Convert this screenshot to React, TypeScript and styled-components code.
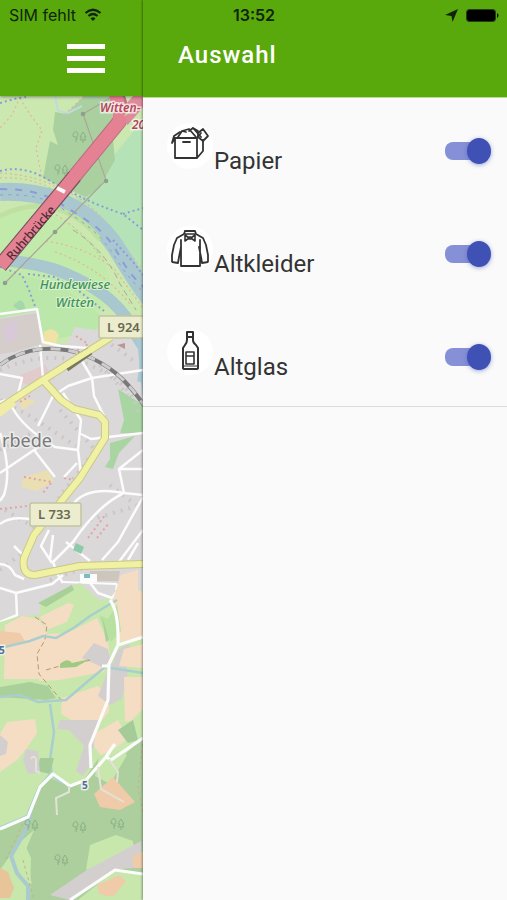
import React from 'react';
import styled, { createGlobalStyle } from 'styled-components';

const GlobalStyle = createGlobalStyle`
  *, *::before, *::after { box-sizing: border-box; }
  html, body { margin: 0; background: #fafafa; }
  body { font-family: Roboto, "Open Sans", sans-serif; color: #333; }
`;

const Screen = styled.div`
  position: relative;
  display: grid;
  grid-template-columns: 143px 1fr;
  min-height: 100vh;
`;

const StatusBar = styled.div`
  position: absolute;
  inset: 0 0 auto 0;
  z-index: 3;
  display: grid;
  grid-template-columns: 1fr auto 1fr;
  align-items: center;
  height: 30px;
  padding: 0 8px 0 9px;
  font-family: Inter, "Liberation Sans", sans-serif;
  font-size: 16px;
  color: #10240a;
`;

const StatusGroup = styled.div<{ $end?: boolean }>`
  display: flex;
  align-items: center;
  gap: 8px;
  justify-content: ${(p) => (p.$end ? 'flex-end' : 'flex-start')};
`;

const Clock = styled.time`
  font-weight: 600;
`;

const MapPane = styled.main`
  display: flex;
  flex-direction: column;
  min-width: 0;
  overflow: hidden;
`;

const MapHeader = styled.header`
  position: relative;
  z-index: 1;
  display: flex;
  justify-content: flex-end;
  height: 96px;
  padding: 40px 36px 0 0;
  background: #5aa90c;
  box-shadow: 0 1px 3px rgba(0, 0, 0, 0.4);
`;

const MenuButton = styled.button`
  width: 42px;
  height: 38px;
  padding: 0;
  border: 0;
  background: transparent;
  color: #fff;
  cursor: pointer;
`;

const MapArt = styled.svg`
  display: block;
  flex: 1;
  width: 100%;
  min-height: 804px;
`;

const Drawer = styled.aside`
  z-index: 2;
  display: flex;
  flex-direction: column;
  min-width: 0;
  background: #fafafa;
  box-shadow: -1px 0 2px rgba(0, 0, 0, 0.35);
`;

const DrawerHeader = styled.header`
  height: 98px;
  padding: 39px 35px 0;
  background: #5aa90c;
  border-bottom: 1px solid #b9dc98;
`;

const Title = styled.h1`
  margin: 0;
  font-size: 24px;
  line-height: 32px;
  font-weight: 500;
  letter-spacing: 1px;
  color: #fff;
`;

const OptionList = styled.ul`
  display: grid;
  grid-auto-rows: 103px;
  margin: -1px 0 0;
  padding: 0;
  list-style: none;
  border-bottom: 1px solid #dcdcdc;
`;

const Option = styled.li`
  display: flex;
  align-items: center;
  justify-content: space-between;
  padding: 0 16px 0 24px;
`;

const OptionLabel = styled.label`
  display: flex;
  align-items: baseline;
  gap: 1px;
  font-size: 24px;
  line-height: 28px;
`;

const OptionIcon = styled.svg`
  width: 46px;
  height: 46px;
  border-radius: 50%;
  background: #fff;
  fill: none;
  stroke: #333;
  stroke-width: 2;
  stroke-linejoin: round;
  stroke-linecap: round;
`;

const Switch = styled.input`
  appearance: none;
  display: flex;
  align-items: center;
  width: 46px;
  height: 26px;
  margin: 4px 0 0;
  cursor: pointer;

  &::before {
    content: '';
    width: 40px;
    height: 18px;
    border-radius: 8px;
    background: #bdbdbd;
  }

  &::after {
    content: '';
    width: 24px;
    height: 26px;
    margin-left: -40px;
    border-radius: 50%;
    background: #f5f5f5;
    box-shadow: 0 1px 4px rgba(63, 81, 181, 0.5);
  }

  &:checked::before { background: #8690d6; }
  &:checked::after { margin-left: -18px; background: #3f51b5; }
`;

const Tree = ({ x, y }: { x: number; y: number }) => (
  <g transform={`translate(${x} ${y})`} fill="none" stroke="#89b284" strokeWidth="1">
    <path d="M-3 5V0M-6-3q3-5 5 0q0 4-3 3q-3 0-2-3M-3 3l2-2" />
    <path d="M4 6V2M4-5L1 0h2L1 3h6L5 0h2z" />
  </g>
);

const StreetMap = () => (
  <MapArt viewBox="0 96 143 804" preserveAspectRatio="xMinYMin slice" role="img" aria-label="Karte">
    <rect y="96" width="143" height="804" fill="#cdebb0" />

    {/* meadows and woodland north of the river */}
    <path d="M143 120L100 172 75 200 112 232 143 290z" fill="#b6e5b8" />
    <path d="M55 112L66 114 84 96H118L117 120 113 140 115 160 99 188 86 197 62 187 43 178 50 141 58 145 53 130z" fill="#abd2a0" />
    <path d="M0 215C40 202 80 222 103 255L112 290 90 330 0 330z" fill="#c3edaa" />
    <path d="M0 270L60 285 110 322 92 332 50 340 0 318z" fill="#bcebaa" />
    <path d="M55 96l3 15 10 2 14-7" fill="none" stroke="#bfdce0" strokeWidth="2" />
    <g fill="none" stroke="#e6b59c" strokeWidth="1.2" strokeDasharray="2 3">
      <path d="M20 97L12 115 0 128M20 98Q30 116 42 130L36 148 42 178M0 173Q30 174 60 188T105 222L143 270M0 178Q30 176 60 193M56 215Q85 232 104 262M46 241Q90 248 115 270L143 308M55 252Q100 267 130 304M84 96l-19 18" />
    </g>

    {/* river arms */}
    <g fill="none" stroke="#a9c8d0">
      <path d="M0 192C46 190 74 205 96 224S124 266 151 300" strokeWidth="18" />
      <path d="M0 260Q40 263 64 273T104 295T132 326T138 400" strokeWidth="12" />
    </g>
    <path d="M0 216C40 195 77 210 100 240" fill="none" stroke="#bfe3a1" strokeWidth="5" />
    <g fill="none" stroke="#8a9ddb">
      <path d="M0 189Q36 189 56 201T92 224T120 257T150 292" strokeWidth="2" strokeDasharray="7 8" />
      <path d="M0 195Q36 193 56 205T90 228T117 260T147 295" strokeWidth="1" strokeDasharray="3 5" />
      <path d="M0 171Q22 165 45 178T85 199T123 214L143 230M123 214l20-6M0 103l14-4 12-2M113 240l20 22 10 13M0 267l22 8 7 15 7 19M28 274l26 3 25 14 25 20" strokeWidth="2" strokeDasharray="2 3" />
    </g>
    <g fill="none" stroke="#a9a797" strokeWidth="1.2">
      <path d="M110 98L83 114 106 180 55 232 5 283" />
      <path d="M73 230Q105 250 120 284L136 310" strokeDasharray="6 4" strokeWidth="1" />
    </g>
    <g fill="#8d9f8a"><circle cx="83" cy="114" r="2.3" /><circle cx="106" cy="181" r="2.3" /><circle cx="55" cy="232" r="2.3" /><circle cx="5" cy="283" r="2.3" /></g>
    <Tree x={79} y={137} /><Tree x={61} y={170} />

    {/* federal road */}
    <path d="M117 96Q124 112 119 122L64 189 0 266" fill="none" stroke="#b5707f" strokeWidth="15" />
    <path d="M75 176L0 266" fill="none" stroke="#6f5058" strokeWidth="15" />
    <path d="M143 96L122 120" fill="none" stroke="#e0899a" strokeWidth="15" />
    <path d="M115 94Q122 110 119 122L64 189 0 266" fill="none" stroke="#e67f92" strokeWidth="13" />
    <path d="M124 117l5-10 4 3z" fill="#c7d59a" />
    <path d="M57 188l8 4" stroke="#fff" strokeWidth="4" />

    {/* town */}
    <path d="M0 318L37 311 43 345 67 344 75 327 95 330 119 320 138 349 143 400V590L112 595 70 625 40 615 0 622z" fill="#dddadb" />
    <path d="M0 319L37 313 41 344 14 352 0 354z" fill="#d6cfcb" />
    <path d="M3 327l10-7 5 8-2 12-10 2z" fill="#dbc9da" />
    <path d="M44 332q10-7 15 4l-5 10-11-1z" fill="#f3e4a5" />
    <path d="M13 306q10-12 12 2l-2 5z" fill="#a6d9aa" />
    <path d="M118 389L143 405V434L120 433 124 420zM110 443l25-7-16 17-6 16-8-2 5-8z" fill="#a9d7a3" />
    <path d="M20 375l25-10 10 14-20 8-16-5z" fill="#e3cdce" />
    <path d="M18 397l18 4-14 10zM24 477l24-7 6 11-17 10-16-4z" fill="#ece1b2" />
    <path d="M135 332q12 18 5 50" fill="none" stroke="#a9ccd8" strokeWidth="6" />
    <g fill="none" stroke="#cdc7c9" strokeWidth="4" strokeDasharray="2 6">
      <path d="M0 370q50-22 92-4t46 48M0 400l30 16 46 30M0 450l30-16M60 410l35 40-45 60M5 510l30 18M90 520l40-12M0 570l24-18M50 580l50-18M110 485l26 20M100 365l28 30M105 340l28 20" />
    </g>
    <g fill="none" stroke="#e5a3a5" strokeWidth="2" strokeDasharray="2 3">
      <path d="M24 477l28 5-10 12M0 509l28-3M76 336l12 8-14 8M88 538l18-24M97 538l12-15M64 478l10 2M20 402l10-6" />
    </g>
    <path d="M117 345l8-2v6z" fill="#bb9690" />
    <g fill="none" stroke="#fff" strokeWidth="2.5" strokeLinejoin="round">
      <path d="M0 314L37 309 43 342 61 346 88 348M40 345L43 378M0 374L22 378 18 394M56 394l12-8 24-8 51-8M82 361l10 17 2 18 10 20M0 402l20-6M12 407Q23 428 55 447L78 450 81 420 63 393M34 450L55 477M79 433l12 6 52-6M78 450l3 24M55 392l-17 34M0 473L40 446" />
      <path d="M0 433Q12 470 4 495L0 501M64 477l13-14M119 469h24M143 450L119 469 124 493 143 495M124 493Q88 486 74 503M124 493Q98 505 73 542L53 562 58 575 63 583M0 524Q10 516 30 519M143 497Q130 520 118 542L102 560M53 535L50 560M143 530L115 567M49 530l-8 16 11 17M128 560l10-17" />
      <path d="M0 564Q10 564 15 575L24 579M0 588L16 593 52 584 63 575M16 593L17 615 0 622M14 546l10 10M66 542L90 561M83 574l15 19 14 5 6-8 1-5" />
    </g>
    <path d="M90 571h30l-2 10H90z" fill="#cfc7bd" /><path d="M80 574h17v8H80z" fill="#fff" />
    <path d="M63 582l54 2M117 584l-1 6" fill="none" stroke="#fff" strokeWidth="2" />
    <path d="M84 574h6v4h-6zM115 593h4v7h-4z" fill="#78bdc4" /><path d="M76 543l8 4-3 7-8-4z" fill="#8accaa" />
    <path d="M0 365C25 346 58 345 84 355S126 379 146 408" fill="none" stroke="#777" strokeWidth="4" />
    <path d="M0 365C25 346 58 345 84 355S126 379 146 408" fill="none" stroke="#cfcfcf" strokeWidth="3" strokeDasharray="10 8" />
    <g fill="none" strokeLinejoin="round">
      <path d="M0 408L43 380 111 337M43 380L61 400 74 409 99 415 105 422V438L80 478 34 535 24 558Q21 575 35 575L80 566 143 564" stroke="#c9ca86" strokeWidth="8" />
      <path d="M66 368L90 351" stroke="#77775d" strokeWidth="8" />
      <path d="M0 408L43 380 111 337M43 380L61 400 74 409 99 415 105 422V438L80 478 34 535 24 558Q21 575 35 575L80 566 143 564" stroke="#f3f4a3" strokeWidth="6" />
    </g>
    <path d="M0 405l12-7 4 7-16 12z" fill="#f1f0a3" />

    {/* farmland */}
    <path d="M40 603L66 589 80 583 98 599 120 603 119 640 143 636V720H115L90 900H0V622L20 616 40 615z" fill="#c8eaad" />
    <path d="M121 575L138 570V590L143 592V637L119 642 117 620 112 602z" fill="#f8dfc4" />
    <path d="M40 617L68 603 74 605 67 622 46 630zM5 625L22 616 39 619 47 632 41 650 40 679H4zM45 634L67 633 97 618 108 642 110 656 104 672 60 680 39 681 39 655zM62 698L98 686 109 696 109 712 98 725 78 724 61 714zM7 722L35 719 37 733 27 748 18 759 0 772V734zM92 735L118 720 128 738 103 758 95 748z" fill="#f8dfc4" />
    <path d="M0 631l20 2 5 8-25 6z" fill="#f2cda9" />
    <path d="M99 615l9 4 9-15 4 27-10 11-7-12z" fill="#b9e2a0" />
    <path d="M82 658l12-15 14 6 3 12-9 6zM117 650l12-6 5 12-9 15-12-7zM110 665l12-9 6 16-6 27-12 6-12-9z" fill="#d6d1d1" />
    <path d="M38 603l34-18 2 5-28 17zM0 687l30-5 18 4 8 12-10 2-46-3zM102 616l7 24-3 2z" fill="#a8d297" />
    <path d="M35 617l12 8-2 15-8 14 2 20 23 27M46 670l14-4M63 663l12 2 15-5" fill="none" stroke="#b69775" strokeWidth="1" strokeDasharray="5 3" />
    <path d="M60 664q8-7 12-1l18-4-14 8-16 1z" fill="#9ecb82" />
    <path d="M124 649l19-5v24l-24-2zM124 677h19v32l-18 18z" fill="#f8dfc4" />
    <g fill="none" stroke="#a9d0cf" strokeWidth="2.5">
      <path d="M0 648L30 641 43 636 56 638 75 627 90 616 117 600M0 697L20 695 38 702 66 700 87 682 105 667 143 673M50 704L54 732 50 760 52 775 67 787" />
      <path d="M0 829L28 817 40 788 51 775" strokeWidth="5" />
    </g>

    {/* southern woods */}
    <path d="M49 777L67 786 84 780 100 756 113 765 143 738V900H30L31 858 22 838 0 870V830L28 816 39 788z" fill="#add19e" />
    <path d="M57 735l23 0 8 27-7 21-14 4-8-30zM120 722l12 22 11-6v-18zM99 756l16-7 12 6-17 29-15-8z" fill="#c8eaad" />
    <path d="M118 730l15-10 5 20-10 3zM40 758h14l-4 16-13-3z" fill="#a5cd98" />
    <path d="M60 720h38l-8 46-7 10-7-5 8-25-15-16-12-1zM26 749l12 2 2 22-12 1-5-14zM0 735l8 7-2 12-6 2z" fill="#d6d1d1" />
    <path d="M94 794l19-17 22 25-15 8-20-3z" fill="#f2cda9" />
    <path d="M90 845L116 835 133 841 134 852 86 870z" fill="#c8eaad" />
    <path d="M50 895L87 870 141 841 143 867 112 870 70 900z" fill="#d6d1d1" />
    <path d="M78 900L115 870 143 874V900z" fill="#c8eaad" />
    <path d="M97 885l22-10 7 6-13 16-14-3zM132 856l11-4v16h-9z" fill="#f2cda9" />
    <path d="M0 868L8 872 14 888 10 898H0z" fill="#eac698" />
    <path d="M18 844l16-14-10 24 8 30-12-8z" fill="#c8eaad" />
    <path d="M31 808L27 828 11 856 17 873 28 886V900" fill="none" stroke="#a9cbd0" strokeWidth="4" />
    <path d="M23 824l-18 38M23 860l11 40M143 738l-5 50 5 25" fill="none" stroke="#c9b080" strokeWidth="1" strokeDasharray="3 3" />
    <g fill="none" stroke="#fff" strokeWidth="3.2" strokeLinejoin="round">
      <path d="M110 600Q119 612 118 645L109 664 108 700 100 720 90 745 91 768M118 645l25-8M109 666h-7M0 829L28 817 40 787 53 774 70 786 86 780 106 757 112 748 115 744M106 757l5 3 32-22M70 900l45-30 28 4" />
    </g>
    <g fill="none" stroke="#e6e4da" strokeWidth="2"><path d="M69 786v6l-13 6 1 17M98 767l3 22 23 13M109 759l9 13-1 10M31 759q3-5 5 0v12l4 2" /></g>
    <Tree x={79} y={827} /><Tree x={117} y={824} /><Tree x={61} y={860} /><Tree x={31} y={825} />

    {/* place names and road numbers */}
    <g fontFamily="Noto Sans, sans-serif">
      <g fontSize="12" fontStyle="italic" fontWeight="600" fill="#b64355" stroke="#fff" strokeOpacity=".7" strokeWidth="3" paintOrder="stroke">
        <text x="100" y="112">Witten-</text><text x="132" y="129">20</text>
      </g>
      <g fontSize="13" fontStyle="italic" fontWeight="500" fill="#379257" stroke="#dff4ce" strokeWidth="2" paintOrder="stroke" textAnchor="middle">
        <text x="75" y="289">Hundewiese</text><text x="75" y="307">Witten</text>
      </g>
      <text transform="translate(12 261) rotate(-49)" fontSize="12" fontWeight="500" fill="#4b2631">Ruhrbrücke</text>
      <text x="2" y="447" fontSize="18" fill="#777" stroke="#eee" strokeWidth="3" paintOrder="stroke">rbede</text>
      <g fill="#eff0d0" stroke="#c3c5a0" strokeWidth="1.5">
        <rect x="99" y="316" width="52" height="22" rx="2" /><rect x="30" y="503" width="51" height="23" rx="2" />
      </g>
      <g fontSize="13" fontWeight="600" fill="#66664c"><text x="107" y="332">L 924</text><text x="38" y="519">L 733</text></g>
      <g fontSize="10" fontWeight="700" fill="#4f6993" stroke="#eef4ee" strokeWidth="3" paintOrder="stroke"><text x="82" y="789">5</text><text x="-1" y="654">5</text></g>
    </g>
    <rect y="96" width="143" height="804" fill="#aaa" fillOpacity=".04" />
  </MapArt>
);

const icons: Record<string, React.ReactNode> = {
  papier: (
    <>
      <path d="M8 15h22v20H8zM30 35l6-7V17M30 15l4-5M8 15l-3 5 2-7 6-4M16 19h7" strokeWidth="1.8" />
      <path d="M11 14l4-6 7-2 7 8M15 8l4 1M22 8l4-3 8 9M26 5l5 3" strokeWidth="1.8" />
      <path d="M31 10l5-4 5 7-5 5-5-4z" strokeWidth="1.8" />
    </>
  ),
  altkleider: (
    <>
      <path d="M18 5h10l1 3 7 4 3 7 2 10v7l-6 1-1-6-2-10M18 5l-1 3-7 4-3 7-2 10v7l6 1 1-6 2-10M14 14v26h19V14" strokeWidth="1.8" />
      <path d="M18 8h10M18 9l4 3-4 3zM28 9l-4 3 4 3zM22 11h2v2h-2z" strokeWidth="1.6" />
    </>
  ),
  altglas: (
    <>
      <path d="M20 3h6v8q0 3 3 5l2 3v20q0 1-2 1H18q-2 0-2-1V19l2-3q2-2 2-5zM20 8h6" />
      <path d="M19 23h8v12h-8zM19 27h8" strokeWidth="1.6" />
      <path d="M17 37h13" strokeWidth="1" />
    </>
  ),
};

const options = [
  { id: 'papier', name: 'Papier' },
  { id: 'altkleider', name: 'Altkleider' },
  { id: 'altglas', name: 'Altglas' },
];

export default function App() {
  return (
    <>
      <GlobalStyle />
      <Screen>
        <StatusBar>
          <StatusGroup>
            <span>SIM fehlt</span>
            <svg width="18" height="14" viewBox="0 0 18 14" fill="none" stroke="currentColor" strokeWidth="2.2" aria-hidden="true">
              <path d="M1.5 5Q9-1.500 16.500 5M4.500 8Q9 4 13.500 8" />
              <path d="M6.500 10.500Q9 8 11.500 10.500L9 13z" fill="currentColor" stroke="none" />
            </svg>
          </StatusGroup>
          <Clock>13:52</Clock>
          <StatusGroup $end>
            <svg width="13" height="13" viewBox="0 0 13 13" aria-hidden="true">
              <path d="M13 0L7.500 13 6.500 7 0 6z" fill="currentColor" />
            </svg>
            <svg width="33" height="13" viewBox="0 0 33 13" aria-hidden="true">
              <rect x=".5" y=".5" width="29" height="12" rx="2.500" fill="none" stroke="#204010" />
              <rect x="1" y="1" width="28" height="11" rx="2" fill="#000" />
              <path d="M31 4q3 2.500 0 5z" fill="#000" />
            </svg>
          </StatusGroup>
        </StatusBar>

        <MapPane>
          <MapHeader>
            <MenuButton type="button" aria-label="Menü">
              <svg width="42" height="38" viewBox="0 0 42 38" fill="currentColor" aria-hidden="true">
                <path d="M2 4h38v5H2zM2 16h38v5H2zM2 28h38v5H2z" />
              </svg>
            </MenuButton>
          </MapHeader>
          <StreetMap />
        </MapPane>

        <Drawer>
          <DrawerHeader>
            <Title>Auswahl</Title>
          </DrawerHeader>
          <OptionList>
            {options.map((o) => (
              <Option key={o.id}>
                <OptionLabel htmlFor={o.id}>
                  <OptionIcon viewBox="0 0 46 46" aria-hidden="true">{icons[o.id]}</OptionIcon>
                  {o.name}
                </OptionLabel>
                <Switch id={o.id} type="checkbox" role="switch" defaultChecked />
              </Option>
            ))}
          </OptionList>
        </Drawer>
      </Screen>
    </>
  );
}
